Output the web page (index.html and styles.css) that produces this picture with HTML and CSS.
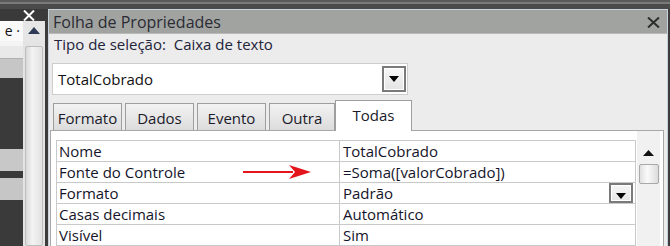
FILE: index.html
```html
<!DOCTYPE html>
<html lang="pt">
<head>
<meta charset="utf-8">
<link rel="stylesheet" href="styles.css">
</head>
<body>
<div class="app">
  <div class="topstrip"></div>
  <div class="main">
    <div class="left">
      <div class="left-head">
        <svg class="lx" width="12" height="11" viewBox="0 0 12 11"><path d="M1 0.5 L11 10.5 M11 0.5 L1 10.5" stroke="#fff" stroke-width="2"/></svg>
      </div>
      <div class="left-row">
        <div class="left-cell">e ·</div>
        <div class="left-up"><svg width="12" height="7" viewBox="0 0 12 7"><path d="M0 7 L6 0 L12 7 Z" fill="#2d3b57"/></svg></div>
      </div>
      <div class="left-list">
        <div class="left-col">
          <div class="lc lc-light"></div>
          <div class="lc lc-gray1"></div>
          <div class="lc lc-dark1"></div>
          <div class="lc lc-gray2"></div>
          <div class="lc lc-dark2"></div>
          <div class="lc lc-gray3"></div>
          <div class="lc lc-dark3"></div>
        </div>
        <div class="left-scroll"><div class="left-thumb"></div></div>
      </div>
    </div>
    <div class="sheet">
      <div class="titlebar">
        <span class="title">Folha de Propriedades</span>
        <svg class="close" width="13" height="11" viewBox="0 0 13 11"><path d="M1 0.5 L12 10.5 M12 0.5 L1 10.5" stroke="#2e2e2e" stroke-width="2"/></svg>
      </div>
      <div class="sheet-body">
        <div class="seltype">Tipo de seleção:&nbsp; Caixa de texto</div>
        <div class="combo">
          <span class="combo-text">TotalCobrado</span>
          <span class="ddbtn"><svg width="10" height="6" viewBox="0 0 10 6"><path d="M0 0 L10 0 L5 6 Z" fill="#000"/></svg></span>
        </div>
        <div class="tabs">
          <div class="tab t1">Formato</div>
          <div class="tab t2">Dados</div>
          <div class="tab t3">Evento</div>
          <div class="tab t4">Outra</div>
          <div class="tab active">Todas</div>
        </div>
        <div class="panel">
          <div class="grid">
            <div class="row"><div class="k">Nome</div><div class="v">TotalCobrado</div></div>
            <div class="row"><div class="k">Fonte do Controle</div><div class="v">=Soma([valorCobrado])</div></div>
            <div class="row"><div class="k">Formato</div><div class="v">Padrão<span class="ddbtn small"><svg width="10" height="6" viewBox="0 0 10 6"><path d="M0 0 L10 0 L5 6 Z" fill="#000"/></svg></span></div></div>
            <div class="row"><div class="k">Casas decimais</div><div class="v">Automático</div></div>
            <div class="row"><div class="k">Visível</div><div class="v">Sim</div></div>
          </div>
          <div class="vscroll">
            <div class="vup"><svg width="11" height="6" viewBox="0 0 11 6"><path d="M0 6 L5.5 0 L11 6 Z" fill="#111"/></svg></div>
            <div class="vthumb"></div>
          </div>
          <svg class="arrow" width="70" height="16" viewBox="0 0 70 16"><path d="M0 7 L50 7 L50 9 L0 9 Z" fill="#e3141c"/><path d="M46 1 L68 8 L46 15 L52 8 Z" fill="#e3141c"/></svg>
        </div>
      </div>
    </div>
  </div>
</div>
</body>
</html>
```

FILE: styles.css
```css
* { box-sizing: border-box; }
html, body { margin: 0; padding: 0; }
body {
  width: 670px;
  height: 246px;
  overflow: hidden;
  background: #3c3c3c;
  font-family: "Open Sans", "Noto Sans", sans-serif;
  color: #1c1c28;
}
.app { width: 670px; height: 246px; display: flex; flex-direction: column; }
.topstrip {
  height: 9px;
  background: linear-gradient(#5a5a5a 0, #5a5a5a 2px, #7a7a7a 2px, #7a7a7a 4px, #4a4a4a 4px, #4a4a4a 9px);
  flex: none;
}
.main { flex: 1; display: flex; min-height: 0; }

/* left pane */
.left { width: 46px; flex: none; background: #3a3a3a; display: flex; flex-direction: column; }
.left-head { height: 31px; display: flex; align-items: center; padding-left: 23px; }
.left-row { height: 20px; display: flex; }
.left-cell {
  width: 23px; background: #fafafa; font-size: 14px; line-height: 20px; color: #111;
  text-align: right; padding-right: 3px; overflow: hidden; white-space: nowrap;
}
.left-up { width: 22px; background: #e6e6e6; display: flex; justify-content: center; align-items: center; padding-bottom: 2px; }
.left-list { flex: 1; display: flex; }
.left-col { width: 23px; display: flex; flex-direction: column; }
.lc { flex: none; }
.lc-light { height: 17px; background: #e9e9e9; border-top: 5px solid #f4f4f4; }
.lc-gray1 { height: 20px; background: #c6c6c6; border-top: 1px solid #b0b0b0; }
.lc-dark1 { height: 71px; background: #3a3a3a; }
.lc-gray2 { height: 22px; background: #c8c8c8; }
.lc-dark2 { height: 7px; background: #3a3a3a; }
.lc-gray3 { height: 22px; background: #c6c6c6; }
.lc-dark3 { flex: 1; background: #3a3a3a; }
.left-scroll { width: 22px; background: #e4e4e4; padding: 5px 2px 0 2px; }
.left-thumb {
  height: 200px;
  background: linear-gradient(90deg, #d9d9d9, #f3f3f3 40%, #e2e2e2);
  border: 1px solid #bdbdbd; border-radius: 2px;
}

/* property sheet */
.sheet {
  margin-left: 2px;
  width: 620px;
  flex: none;
  border: 1px solid #c8d2dc;
  border-bottom: none;
  background: #ececec;
  display: flex; flex-direction: column;
}
.titlebar {
  height: 24px; flex: none;
  background: #a1a3a1;
  border-bottom: 1px solid #b8bab8;
  display: flex; align-items: center; justify-content: space-between;
  padding: 0 7px 0 4px;
}
.title { font-size: 16px; color: #2b2b33; line-height: 24px; }
.close { margin-top: 1px; }
.sheet-body { flex: 1; display: flex; flex-direction: column; }
.seltype { height: 21px; line-height: 21px; font-size: 15px; padding-left: 5px; margin-top: 0; color: #23233a; }
.combo {
  margin: 8px 0 0 3px; width: 356px; height: 32px;
  background: #fff; border: 1px solid #cdcdcd;
  display: flex; align-items: center; justify-content: space-between;
  padding: 0 1px 0 5px;
}
.combo-text { font-size: 15px; color: #111; }
.ddbtn {
  width: 24px; height: 26px;
  border: 2px solid #7a7a7a;
  background: linear-gradient(#f7f7f7, #e4e4e4);
  display: flex; align-items: center; justify-content: center;
  box-shadow: inset 0 0 0 1px #fff;
}
.ddbtn.small { width: 24px; height: 20px; margin-right: 2px; align-items: flex-end; padding-bottom: 2px; }
.tabs { margin: 5px 0 0 4px; height: 30px; display: flex; align-items: flex-end; }
.tab {
  height: 27px; font-size: 15px; color: #1a1a2a;
  background: linear-gradient(#f2f2f2, #dcdcdc);
  border: 1px solid #9e9e9e; border-bottom: none;
  display: flex; align-items: center; justify-content: center;
  padding-top: 2px;
}
.t1 { width: 69px; margin-right: 3px; }
.t2 { width: 69px; margin-right: 3px; }
.t3 { width: 69px; margin-right: 3px; }
.t4 { width: 66px; margin-right: 0; }
.active { width: 77px; height: 31px; background: #fff; margin-bottom: -1px; position: relative; z-index: 1; padding-top: 0; padding-bottom: 3px; }

.panel {
  flex: 1; margin: 0 3px 0 1px;
  background: #fff; border: 1px solid #a7a7a7; border-bottom: none;
  display: flex; padding: 9px 2px 0 5px;
  position: relative;
}
.grid { width: 580px; border-top: 1px solid #c9c9c9; border-left: 1px solid #c9c9c9; border-right: 1px solid #c9c9c9; }
.row { height: 21px; display: flex; border-bottom: 1px solid #c9c9c9; font-size: 15px; line-height: 20px; color: #15152a; }
.k { width: 283px; padding-left: 2px; border-right: 1px solid #c9c9c9; }
.v { flex: 1; padding-left: 3px; display: flex; justify-content: space-between; }
.vscroll { width: 23px; margin-left: 1px; background: #f1f1f1; display: flex; flex-direction: column; align-items: center; margin-top: -9px; padding-top: 19px; }
.vup { height: 6px; display: flex; }
.vthumb {
  margin-top: 8px; width: 20px; height: 20px;
  background: linear-gradient(90deg, #e0e0e0, #fafafa 40%, #dcdcdc);
  border: 1px solid #a9a9a9; border-radius: 2px;
}
.arrow { position: absolute; left: 192px; top: 33px; }
```
